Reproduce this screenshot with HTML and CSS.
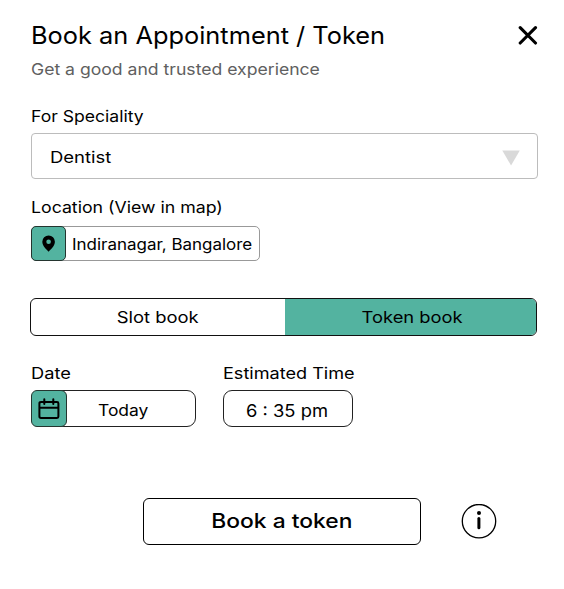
FILE: index.html
```html
<!DOCTYPE html>
<html lang="en">
<head>
<meta charset="utf-8">
<title>Book an Appointment / Token</title>
<link rel="stylesheet" href="styles.css">
</head>
<body>
<main class="booking">
  <header class="header">
    <h1 class="title"><span class="t-title">Book an Appointment / Token</span></h1>
    <button class="close" aria-label="Close">
      <svg width="20" height="20" viewBox="0 0 20 20"><path d="M2.2 2.7 17.5 18M17.5 2.7 2.2 18" fill="none" stroke="#000" stroke-width="3.1" stroke-linecap="round"/></svg>
    </button>
  </header>
  <p class="subtitle"><span class="t-sub">Get a good and trusted experience</span></p>

  <div class="label"><span class="t-spec">For Speciality</span></div>
  <div class="select">
    <span class="t-dentist">Dentist</span>
    <svg width="18" height="18" viewBox="0 0 18 18"><path d="M.3 2.5H17.8L9.05 17.5Z" fill="#d9d9d9"/></svg>
  </div>

  <div class="label label-location"><span class="t-loc">Location (View in map)</span></div>
  <div class="location">
    <span class="icon-box">
      <svg width="14" height="18" viewBox="0 0 14 18"><path fill-rule="evenodd" d="M6.6 .5A6.3 6.3 0 0 0 .3 6.8C.3 11.1 4.6 14.4 6.6 16.7 8.6 14.4 12.9 11.1 12.9 6.8A6.3 6.3 0 0 0 6.6 .5ZM6.6 4.4A2.3 2.3 0 1 1 6.6 9 2.3 2.3 0 0 1 6.6 4.4Z"/></svg>
    </span>
    <span class="location-name"><span class="t-indira">Indiranagar, Bangalore</span></span>
  </div>

  <div class="tabs">
    <button class="tab"><span class="t-slot">Slot book</span></button>
    <button class="tab tab-active"><span class="t-tokenbook">Token book</span></button>
  </div>

  <div class="schedule">
    <div class="field-date">
      <div class="label"><span class="t-date">Date</span></div>
      <div class="box">
        <span class="icon-box icon-date">
          <svg width="22" height="22" viewBox="0 0 22 22"><path d="M3 4H19Q20.4 4 20.4 5.4V18.6Q20.4 20 19 20H3Q1.4 20 1.4 18.6V5.4Q1.4 4 3 4ZM1.4 9.8H20.4M6.3 1.2V6M15.3 1.2V6" fill="none" stroke="#000" stroke-width="2" stroke-linecap="round"/></svg>
        </span>
        <span class="date-value"><span class="t-today">Today</span></span>
      </div>
    </div>
    <div class="field-time">
      <div class="label"><span class="t-est">Estimated Time</span></div>
      <div class="box time-value"><span class="t-time">6 : 35 pm</span></div>
    </div>
  </div>

  <footer class="actions">
    <button class="book"><span class="t-book">Book a token</span></button>
    <button class="info" aria-label="Information">
      <svg width="36" height="36" viewBox="0 0 36 36"><circle cx="18" cy="17.2" r="16.7" fill="none" stroke="#000" stroke-width="1.3"/><circle cx="18" cy="9" r="2"/><path d="M17.9 14.6V23.8" stroke="#000" stroke-width="3" stroke-linecap="round"/></svg>
    </button>
  </footer>
</main>
</body>
</html>
```
FILE: styles.css
```css
* { box-sizing: border-box; }
body {
  margin: 0;
  background: #fff;
  color: #000;
  font: 400 16px/20px Inter, "Liberation Sans", sans-serif;
}
button {
  padding: 0;
  border: 0;
  background: none;
  color: inherit;
  font: inherit;
}
svg { display: block; flex: none; }
span { white-space: nowrap; }

.booking { padding: 20px 26px 0 31px; }
.header {
  display: flex;
  justify-content: space-between;
  align-items: center;
  height: 30px;
}
.title { margin: 0; padding-top: 1px; font-size: 24px; font-weight: 400; line-height: 30px; }
.subtitle { margin: 9px 0 27px; color: #606060; }
.label { height: 20px; }
.select {
  display: flex;
  justify-content: space-between;
  align-items: center;
  height: 46px;
  margin-top: 7px;
  padding: 2px 17px 0 18px;
  border: 1px solid #bcbcbc;
  border-radius: 4px;
}
.label-location { margin-top: 18px; }
.location {
  display: flex;
  width: 229px;
  height: 35px;
  margin-top: 9px;
  border: 1px solid #999;
  border-radius: 5px;
}
.icon-box {
  display: flex;
  justify-content: center;
  align-items: center;
  width: 35px;
  margin: -1px 0 -1px -1px;
  border: 1px solid #24352f;
  border-radius: 5px;
  background: #53b3a0;
}
.location-name { padding: 7px 0 0 6px; }
.tabs {
  display: flex;
  width: 507px;
  height: 38px;
  margin: 37px 0 0 -1px;
  overflow: hidden;
  border: 1px solid #111;
  border-radius: 6px;
}
.tab { width: 254px; }
.tab-active { flex: 1; padding-left: 4px; background: #53b3a0; }
.schedule { display: flex; gap: 27px; margin-top: 27px; }
.field-date { width: 165px; }
.box {
  display: flex;
  height: 37px;
  margin-top: 7px;
  border: 1px solid #222;
  border-radius: 9px;
}
.icon-date { width: 36px; border-radius: 6px; }
.date-value { padding: 9px 0 0 31px; }
.time-value { width: 130px; padding: 10px 0 0 22px; }
.actions {
  display: flex;
  align-items: center;
  gap: 40px;
  margin: 71px 0 0 112px;
}
.book {
  width: 278px;
  height: 47px;
  padding-bottom: 2px;
  border: 1.5px solid #000;
  border-radius: 6px;
  font-size: 20px;
  font-weight: 500;
}

/* Widened letterforms */
[class^="t-"] { display: inline-block; transform-origin: left center; }
.tab span, .book span { transform-origin: center; }
.t-title { transform: scaleX(1.057); }
.t-sub { transform: scaleX(1.1); }
.t-spec { transform: scaleX(1.098); }
.t-dentist { transform: scaleX(1.155); }
.t-loc { transform: scaleX(1.107); }
.t-indira { transform: scaleX(1.06); }
.t-slot { transform: scaleX(1.15); }
.t-tokenbook { transform: scaleX(1.145); }
.t-date { transform: scaleX(1.14); }
.t-today { transform: scaleX(1.09); }
.t-est { transform: scaleX(1.13); }
.t-time { font-size: 17px; transform: scaleX(1.08); }
.t-book { transform: scaleX(1.14); }
```
